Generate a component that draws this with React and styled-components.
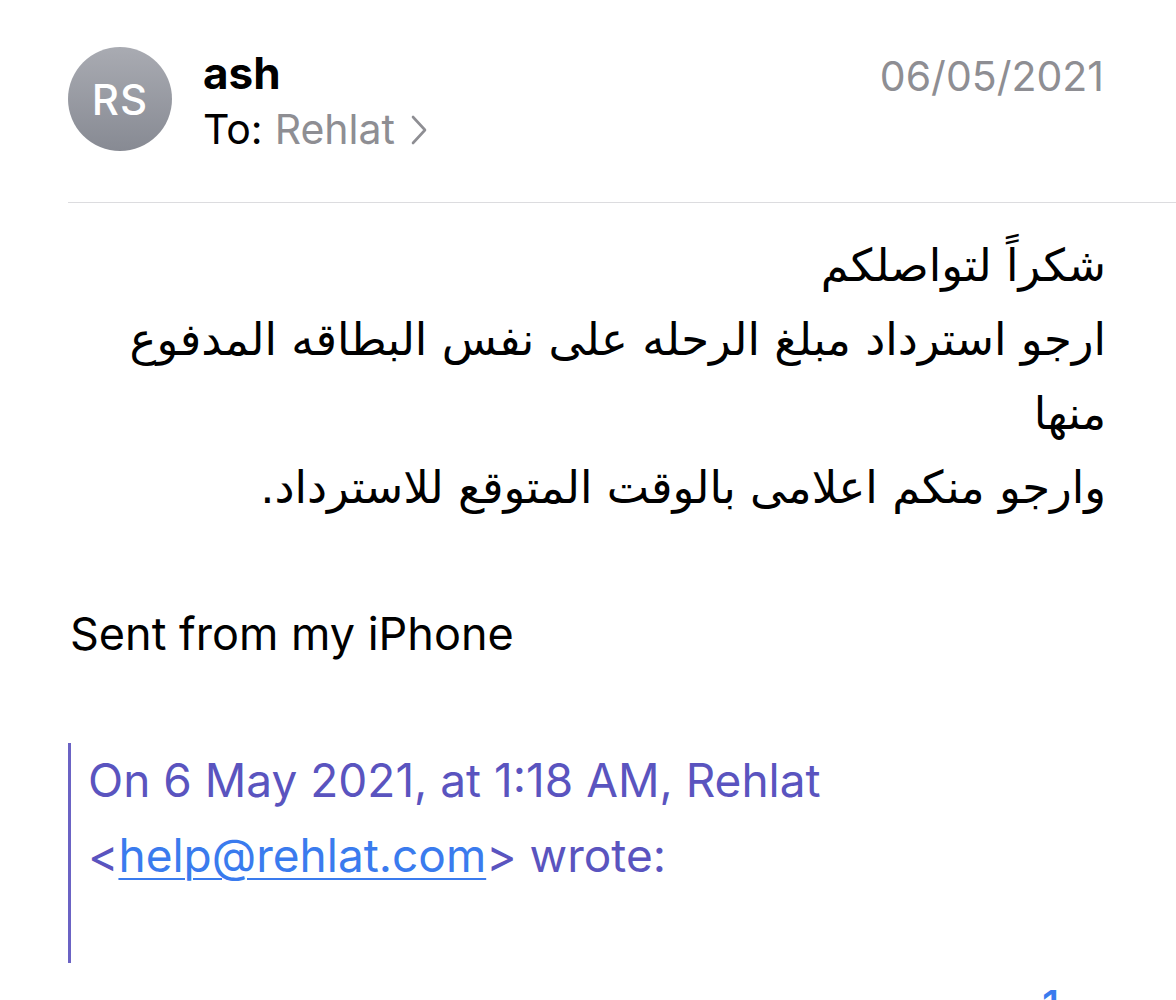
import React from 'react';
import styled, { createGlobalStyle } from 'styled-components';

const GlobalStyle = createGlobalStyle`
  html, body {
    margin: 0;
    padding: 0;
    background: #ffffff;
  }
  body {
    font-family: "Inter", "DejaVu Sans", sans-serif;
    color: #000;
    overflow: hidden;
  }
`;

const Page = styled.div`
  width: 1176px;
  height: 1000px;
  overflow: hidden;
  position: relative;
`;

const Header = styled.div`
  display: flex;
  align-items: flex-start;
  padding: 47px 72px 0 68px;
  height: 202px;
  box-sizing: border-box;
`;

const Avatar = styled.div`
  width: 104px;
  height: 104px;
  border-radius: 50%;
  background: linear-gradient(180deg, #a9abb2 0%, #878a93 100%);
  color: #fff;
  display: flex;
  align-items: center;
  justify-content: center;
  font-size: 42px;
  font-weight: 500;
  letter-spacing: 1px;
  flex-shrink: 0;
`;

const Sender = styled.div`
  display: flex;
  flex-direction: column;
  margin-left: 31px;
  flex: 1;
`;

const Name = styled.div`
  font-size: 44px;
  font-weight: 700;
  line-height: 56px;
  margin-top: -2px;
`;

const ToLine = styled.div`
  font-size: 41px;
  line-height: 56px;
  display: flex;
  align-items: center;
`;

const Muted = styled.span`
  color: #8e8e93;
  margin-left: 12px;
`;

const Chevron = styled.svg`
  margin-left: 16px;
  margin-top: 2px;
`;

const DateText = styled.div`
  font-size: 41px;
  color: #8e8e93;
  line-height: 56px;
  margin-top: 1px;
`;

const Divider = styled.div`
  height: 1px;
  background: #dcdcdf;
  margin-left: 68px;
`;

const Body = styled.div`
  padding: 26px 70px 0 70px;
`;

const Arabic = styled.div`
  direction: rtl;
  text-align: right;
  font-size: 45px;
  line-height: 74px;
  font-family: "DejaVu Sans", sans-serif;
`;

const Signature = styled.div`
  font-size: 45px;
  line-height: 60px;
  margin-top: 79px;
`;

const Quote = styled.div`
  margin-top: 79px;
  margin-left: -2px;
  border-left: 3px solid #6b63c4;
  height: 220px;
  padding-left: 17px;
  box-sizing: border-box;
`;

const QuoteText = styled.div`
  font-size: 46px;
  line-height: 75px;
  color: #5a54bf;
`;

const Link = styled.a`
  color: #3a7bee;
  text-decoration: underline;
  text-decoration-thickness: 2px;
  text-underline-offset: 6px;
`;

const Corner = styled.div`
  position: absolute;
  left: 1042px;
  top: 980px;
  font-size: 42px;
  color: #3a7bee;
  font-weight: 500;
`;

export default function App() {
  return (
    <Page>
      <GlobalStyle />
      <Header>
        <Avatar>RS</Avatar>
        <Sender>
          <Name>ash</Name>
          <ToLine>
            To:<Muted>Rehlat</Muted>
            <Chevron width="16" height="30" viewBox="0 0 16 30">
              <path d="M2 2 L14 15 L2 28" fill="none" stroke="#8e8e93" strokeWidth="2.6" strokeLinecap="round" strokeLinejoin="round" />
            </Chevron>
          </ToLine>
        </Sender>
        <DateText>06/05/2021</DateText>
      </Header>
      <Divider />
      <Body>
        <Arabic>
          <div>شكراً لتواصلكم</div>
          <div>ارجو استرداد مبلغ الرحله على نفس البطاقه المدفوع<br />منها</div>
          <div>وارجو منكم اعلامى بالوقت المتوقع للاسترداد.</div>
        </Arabic>
        <Signature>Sent from my iPhone</Signature>
        <Quote>
          <QuoteText>On 6 May 2021, at 1:18 AM, Rehlat</QuoteText>
          <QuoteText>
            &lt;<Link href="#">help@rehlat.com</Link>&gt; wrote:
          </QuoteText>
        </Quote>
      </Body>
      <Corner>1</Corner>
    </Page>
  );
}
